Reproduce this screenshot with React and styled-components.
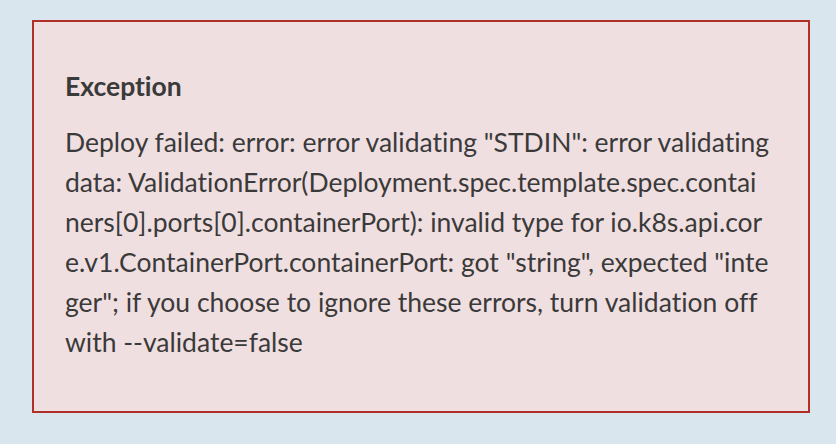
import React from 'react'
import styled, { createGlobalStyle } from 'styled-components';

const GlobalStyle = createGlobalStyle`
  html, body {
    margin: 0;
    padding: 0;
    background-color: #dae6ed;
  }
  body {
    font-family: Lato, "Open Sans", sans-serif;
    font-variant-ligatures: none;
    color: #3a3a3a;
  }
`;

const messageLines = [
  'Deploy failed: error: error validating "STDIN": error validating',
  'data: ValidationError(Deployment.spec.template.spec.contai',
  'ners[0].ports[0].containerPort): invalid type for io.k8s.api.cor',
  'e.v1.ContainerPort.containerPort: got "string", expected "inte',
  'ger"; if you choose to ignore these errors, turn validation off',
  'with --validate=false',
];

function App() {
  return (
    <>
      <GlobalStyle />
      <Page>
        <ErrorBox>
          <Title>Exception</Title>
          <Message>
            {messageLines.map((line, i) => (
              <Line key={i}>{line}</Line>
            ))}
          </Message>
        </ErrorBox>
      </Page>
    </>
  )
}

const Page = styled.div`
  width: 836px;
  height: 444px;
  padding: 20px 26px 0 32px;
  box-sizing: border-box;
`;

const ErrorBox = styled.div`
  box-sizing: border-box;
  height: 393px;
  padding: 44px 31px 30px 31px;
  background-color: #f0dfe0;
  border: 2px solid #b02f28;
`;

const Title = styled.h4`
  margin: 0 0 16px 0;
  font-size: 26.5px;
  line-height: 40px;
  font-weight: 700;
`;

const Message = styled.div`
  font-size: 26.5px;
  line-height: 40px;
`;

const Line = styled.span`
  display: block;
  white-space: nowrap;
  font-variant-ligatures: none;
`;

export default App
